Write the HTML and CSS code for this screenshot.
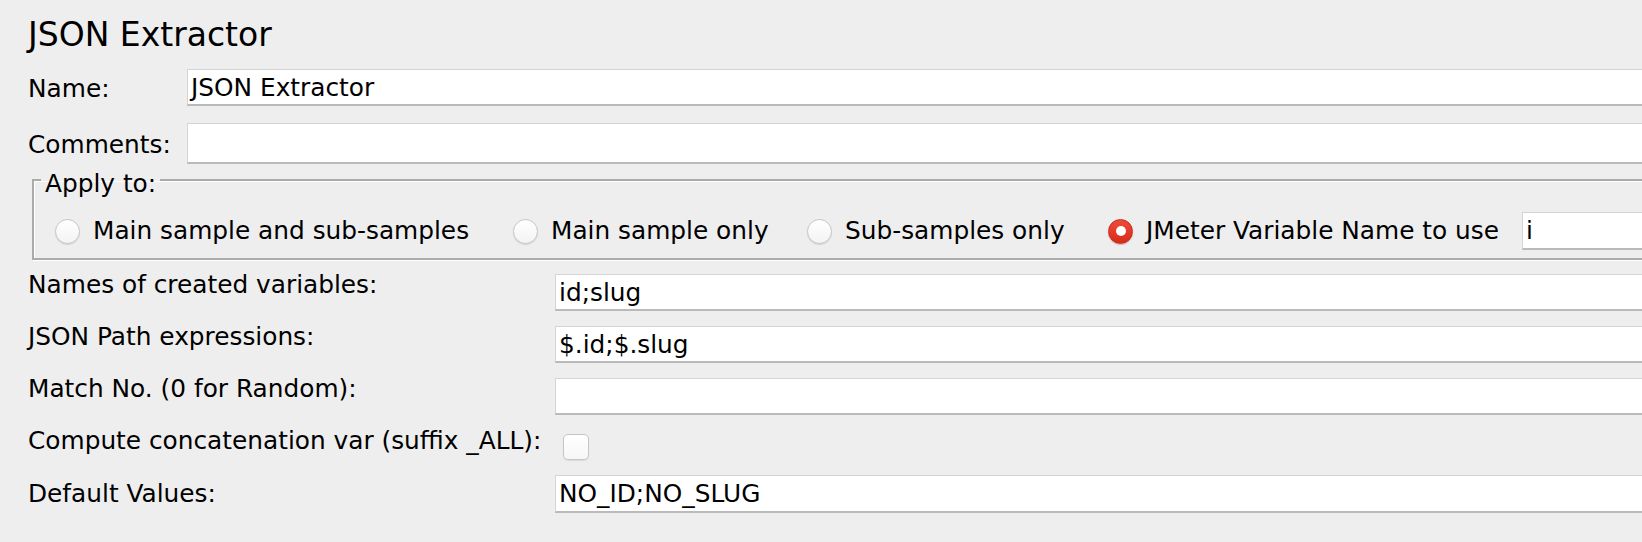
FILE: index.html
```html
<!DOCTYPE html>
<html lang="en">
<head>
<meta charset="utf-8">
<title>JSON Extractor</title>
<link rel="stylesheet" href="styles.css">
</head>
<body>
<main class="extractor">
  <h1 class="title">JSON Extractor</h1>

  <div class="line line-name">
    <span class="caption caption-top">Name:</span>
    <div class="field field-name">JSON Extractor</div>
  </div>

  <div class="line line-comments">
    <span class="caption caption-top">Comments:</span>
    <div class="field field-comments"></div>
  </div>

  <fieldset class="scope">
    <legend>Apply to:</legend>
    <div class="scope-options">
      <label class="option option-both"><span class="radio"></span><span class="option-text">Main sample and sub-samples</span></label>
      <label class="option option-main"><span class="radio"></span><span class="option-text">Main sample only</span></label>
      <label class="option option-sub"><span class="radio"></span><span class="option-text">Sub-samples only</span></label>
      <label class="option option-var"><span class="radio is-on"></span><span class="option-text">JMeter Variable Name to use</span></label>
      <div class="field field-var">i</div>
    </div>
  </fieldset>

  <div class="settings">
    <span class="caption">Names of created variables:</span>
    <div class="field">id;slug</div>

    <span class="caption">JSON Path expressions:</span>
    <div class="field">$.id;$.slug</div>

    <span class="caption">Match No. (0 for Random):</span>
    <div class="field"></div>

    <span class="caption">Compute concatenation var (suffix _ALL):</span>
    <div class="check-cell"><span class="checkbox"></span></div>

    <span class="caption caption-low">Default Values:</span>
    <div class="field field-tall">NO_ID;NO_SLUG</div>
  </div>
</main>
</body>
</html>
```

FILE: styles.css
```css
html, body {
  margin: 0;
  padding: 0;
  background: #eeeeee;
  overflow: hidden;
}

body {
  font-family: "DejaVu Sans", "Liberation Sans", sans-serif;
  font-size: 24.8px;
  color: #000;
}

.extractor {
  padding: 0 0 0 28px;
}

/* heading */
.title {
  margin: 15px 0 14px 0;
  font-size: 33px;
  font-weight: normal;
  line-height: 40px;
}

/* label + text field rows at the top */
.line {
  display: flex;
  align-items: center;
}

.line-comments {
  margin-top: 17px;
}

.caption {
  line-height: 22px;
  white-space: nowrap;
}

.line .caption {
  width: 159px;
  flex: none;
  padding-top: 2px;
}

.field {
  box-sizing: border-box;
  height: 37px;
  background: #fff;
  border-top: 1px solid #d4d4d4;
  border-left: 1px solid #d4d4d4;
  border-bottom: 2px solid #bababa;
  padding: 1px 0 0 3px;
  display: flex;
  align-items: center;
  white-space: nowrap;
  line-height: 22px;
}

.line .field {
  flex: 1;
}

.field-comments {
  height: 41px;
}

/* "Apply to" group */
.scope {
  margin: -2px -12px 0 4px;
  padding: 14px 0 8px 7px;
  border: 2px solid #ababab;
  box-shadow: 1px 1px 0 #fff, inset 1px 1px 0 #fff;
}

.scope legend {
  padding: 8px 4px 0;
  line-height: 28px;
}

.scope-options {
  display: flex;
  align-items: center;
  padding-left: 14px;
}

.option {
  display: flex;
  align-items: center;
  gap: 13px;
  margin-right: 35px;
  line-height: 22px;
  white-space: nowrap;
}

.option-text {
  display: block;
}

.option-both .option-text { width: 385px; }
.option-main .option-text { width: 221px; }
.option-sub .option-text { width: 228px; }
.option-var .option-text { width: 353px; }

.option-var {
  margin-right: 23px;
}

.radio {
  box-sizing: border-box;
  width: 25px;
  height: 25px;
  flex: none;
  border-radius: 50%;
  border: 1px solid #c6c6c6;
  background: linear-gradient(#ffffff, #f3f3f3);
  box-shadow: 0 1px 1px rgba(0, 0, 0, 0.12);
  position: relative;
}

.radio.is-on {
  border-color: #c8281b;
  background: linear-gradient(#ee4a38, #d92b1b);
  box-shadow: 0 1px 1px rgba(120, 0, 0, 0.25);
}

.radio.is-on::after {
  content: "";
  position: absolute;
  left: 50%;
  top: 50%;
  width: 10px;
  height: 10px;
  margin: -5px 0 0 -5px;
  border-radius: 50%;
  background: #fff;
}

.field-var {
  flex: 1;
  height: 38px;
}

/* extractor settings */
.settings {
  display: grid;
  grid-template-columns: 527px 1fr;
  row-gap: 15px;
  align-items: start;
  margin-top: 14px;
}

.caption-low {
  padding-top: 8px;
}

.field-tall {
  height: 38px;
}

.check-cell {
  padding: 4px 0 0 8px;
}

.checkbox {
  display: block;
  box-sizing: border-box;
  width: 26px;
  height: 26px;
  border-radius: 5px;
  border: 1px solid #c6c6c6;
  background: linear-gradient(#ffffff, #f6f6f6);
  box-shadow: 0 1px 1px rgba(0, 0, 0, 0.08);
}
```
